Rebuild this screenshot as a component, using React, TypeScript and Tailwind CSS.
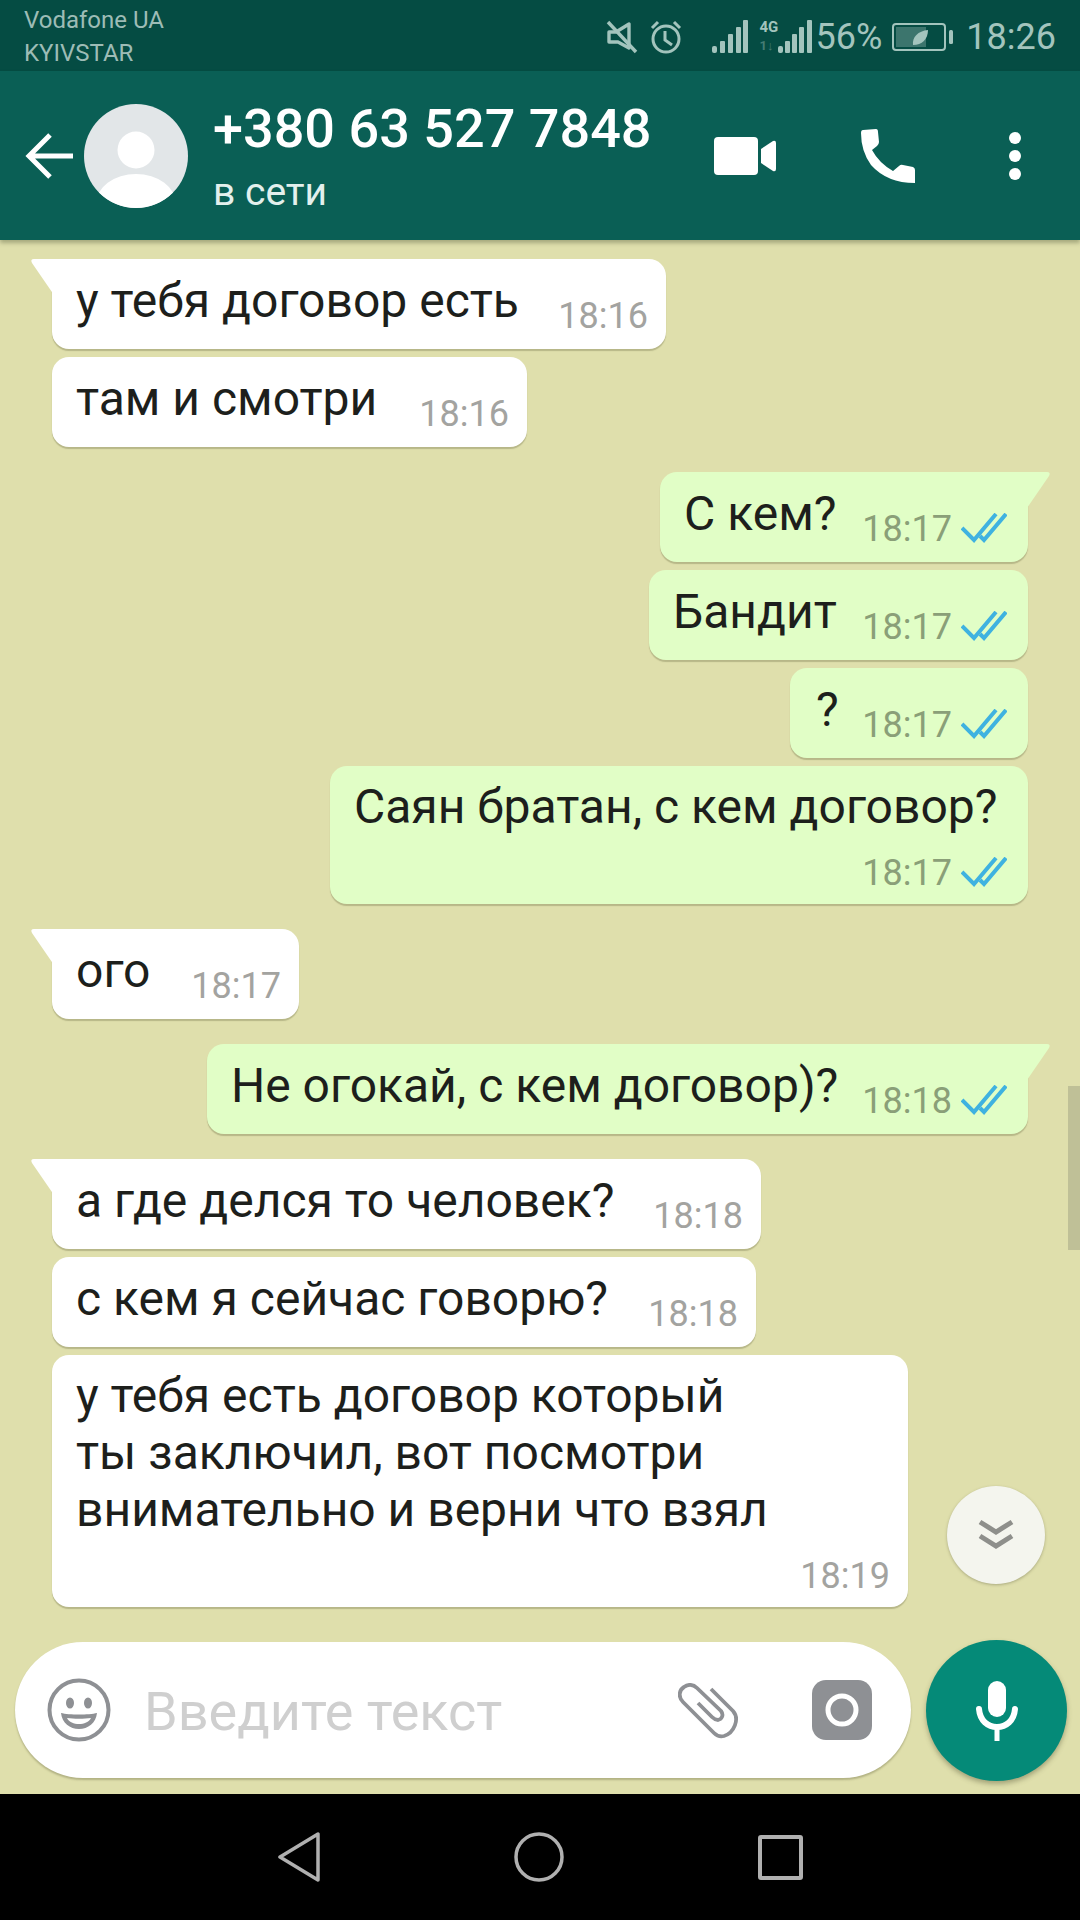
import React from 'react';

type Msg = { text: React.ReactNode; time: string; out?: boolean; tail?: boolean; block?: boolean; w: string; mt: string };

const MESSAGES: Msg[] = [
  { text: 'у тебя договор есть', time: '18:16', tail: true, w: 'w-[614px]', mt: 'mt-0' },
  { text: 'там и смотри', time: '18:16', w: 'w-[475px]', mt: 'mt-[8px]' },
  { text: 'С кем?', time: '18:17', out: true, tail: true, w: 'w-[368px]', mt: 'mt-[25px]' },
  { text: 'Бандит', time: '18:17', out: true, w: 'w-[379px]', mt: 'mt-[8px]' },
  { text: '?', time: '18:17', out: true, w: 'w-[238px]', mt: 'mt-[8px]' },
  { text: 'Саян братан, с кем договор?', time: '18:17', out: true, block: true, w: 'w-[698px]', mt: 'mt-[8px]' },
  { text: 'ого', time: '18:17', tail: true, w: 'w-[247px]', mt: 'mt-[25px]' },
  { text: 'Не огокай, с кем договор)?', time: '18:18', out: true, tail: true, w: 'w-[821px]', mt: 'mt-[25px]' },
  { text: 'а где делся то человек?', time: '18:18', tail: true, w: 'w-[709px]', mt: 'mt-[25px]' },
  { text: 'с кем я сейчас говорю?', time: '18:18', w: 'w-[704px]', mt: 'mt-[8px]' },
  {
    text: (
      <>
        у тебя есть договор который
        <br />
        ты заключил, вот посмотри
        <br />
        внимательно и верни что взял
      </>
    ),
    time: '18:19',
    block: true,
    w: 'w-[856px]',
    mt: 'mt-[8px]',
  },
];

const Ticks = () => (
  <svg width="46" height="30" viewBox="0 0 46 30" fill="none" stroke="#3fb2e0" strokeWidth="4" className="shrink-0 -mt-[2px]">
    <path d="M1 15 L13 27 L35 1" />
    <path d="M19 23 L23 27 L45 1" />
  </svg>
);

const Bubble = ({ m }: { m: Msg }) => {
  const timeColor = m.out ? 'text-[#8a9f78]' : 'text-[#a3a3a0]';
  return (
    <div
      className={`relative ${m.w} ${m.mt} ${m.out ? 'self-end bg-[#e1fec6]' : 'self-start bg-white'} rounded-[17px] shadow-[0_2px_1px_rgba(110,110,70,0.35)] ${m.tail ? (m.out ? 'rounded-tr-none' : 'rounded-tl-none') : ''}`}
    >
      {m.tail && (
        <svg
          width="24"
          height="36"
          viewBox="0 0 24 36"
          className={`absolute top-0 ${m.out ? 'right-[-23px]' : 'left-[-22px]'}`}
        >
          <path d={m.out ? 'M0 0 H20 Q24 0 22 4 L0 36 Z' : 'M24 0 H4 Q0 0 2 4 L24 36 Z'} fill={m.out ? '#e1fec6' : '#ffffff'} />
        </svg>
      )}
      {m.block ? (
        <div className="pl-[24px] pr-[25px] pt-[12px] pb-[13px]">
          <div className="text-[48px] leading-[57px] text-[#1d1f1c]">{m.text}</div>
          <div className={`flex justify-end items-center gap-[9px] h-[36px] mt-[20px] ${m.out ? '-mr-[4px]' : '-mr-[7px]'}`}>
            <span className={`text-[36px] ${timeColor}`}>{m.time}</span>
            {m.out && <Ticks />}
          </div>
        </div>
      ) : (
        <div className={`h-[90px] flex justify-between pl-[24px] ${m.out ? 'pr-[21px]' : 'pr-[18px]'}`}>
          <span className={`text-[48px] leading-[57px] pt-[13px] text-[#1d1f1c] ${m.text === '?' ? 'ml-[2px]' : ''}`}>{m.text}</span>
          <div className="flex items-center gap-[9px] h-[36px] mt-[39px]">
            <span className={`text-[36px] ${timeColor}`}>{m.time}</span>
            {m.out && <Ticks />}
          </div>
        </div>
      )}
    </div>
  );
};

const StatusIcons = () => (
  <div className="flex items-center text-[#a3c4bd] pt-[2px]">
    {/* muted speaker */}
    <svg width="32" height="34" viewBox="0 0 32 34" className="mr-[12px]">
      <path d="M23 4 V28 L12 22 H3 V12 H10 Z" fill="none" stroke="currentColor" strokeWidth="3.4" strokeLinejoin="round" />
      <path d="M2 2 L30 32" stroke="currentColor" strokeWidth="3.4" />
    </svg>
    {/* alarm */}
    <svg width="32" height="34" viewBox="0 0 32 34" fill="none" stroke="currentColor" strokeWidth="3" className="mr-[30px]">
      <circle cx="16" cy="19" r="13" />
      <path d="M15 11 V20 L22 25" />
      <path d="M2 8 L8 2 M30 8 L24 2" />
    </svg>
    {/* signal 1 */}
    <svg width="36" height="34" viewBox="0 0 36 34" fill="currentColor" className="mr-[12px]">
      <rect x="0" y="26" width="5" height="7" rx="2" />
      <rect x="8" y="21" width="5" height="12" rx="1" />
      <rect x="16" y="14" width="5" height="19" rx="1" />
      <rect x="24" y="7" width="5" height="26" rx="1" />
      <rect x="31" y="0" width="5" height="33" rx="1" />
    </svg>
    {/* 4G + signal 2 */}
    <div className="relative w-[16px] h-[34px] mr-[2px] font-['Liberation_Sans_Narrow','Roboto',sans-serif]">
      <span className="absolute left-0 top-[-2px] text-[15px] font-bold leading-[18px]">4G</span>
      <span className="absolute left-0 top-[18px] text-[13px] font-bold leading-[16px] opacity-40">1↓</span>
    </div>
    <svg width="34" height="34" viewBox="0 0 34 34" fill="currentColor" className="mr-[4px]">
      <rect x="0" y="26" width="5" height="7" rx="2" />
      <rect x="7" y="21" width="5" height="12" rx="1" />
      <rect x="14" y="14" width="5" height="19" rx="1" />
      <rect x="21" y="7" width="5" height="26" rx="1" />
      <rect x="29" y="0" width="5" height="33" rx="1" />
    </svg>
    <span className="text-[36px] leading-none mr-[10px]">56%</span>
    {/* battery */}
    <svg width="61" height="28" viewBox="0 0 61 28" className="mr-[13px]">
      <rect x="1" y="1" width="52" height="26" rx="3" fill="none" stroke="currentColor" strokeWidth="2" />
      <rect x="4" y="4" width="30" height="20" fill="currentColor" opacity="0.35" />
      <path d="M36 7 C26 8 20 14 21 22 C30 22 36 16 36 7 Z" fill="currentColor" />
      <rect x="57" y="7" width="4" height="14" rx="1.5" fill="currentColor" />
    </svg>
    <span className="text-[36px] leading-none">18:26</span>
  </div>
);

export default function App() {
  return (
    <div className="w-[1080px] h-[1920px] flex flex-col overflow-hidden font-['Roboto',sans-serif]">
      <div className="h-[71px] shrink-0 bg-[#054c43] flex justify-between pl-[24px] pr-[24px]">
        <div className="text-[24px] leading-[33px] text-[#9dbcb6] pt-[4px]">
          <div>Vodafone UA</div>
          <div>KYIVSTAR</div>
        </div>
        <StatusIcons />
      </div>

      <div className="relative z-10 h-[169px] shrink-0 bg-[#0a5f55] flex items-center shadow-[0_3px_4px_rgba(60,70,40,0.35)]">
        <svg width="48" height="46" viewBox="0 0 48 46" fill="none" stroke="#ffffff" strokeWidth="5" className="ml-[25px] shrink-0">
          <path d="M48 23 H4 M25 2 L4 23 L25 44" />
        </svg>
        <div className="w-[104px] h-[104px] rounded-full bg-[#e2e6e8] overflow-hidden ml-[11px] shrink-0">
          <svg viewBox="0 0 104 104" width="104" height="104" fill="#ffffff">
            <circle cx="52" cy="46" r="18.5" />
            <ellipse cx="52" cy="100" rx="40" ry="30" />
          </svg>
        </div>
        <div className="ml-[25px] w-[501px] shrink-0">
          <div className="text-[54px] leading-[62px] font-medium text-white whitespace-nowrap">+380 63 527 7848</div>
          <div className="text-[39px] leading-[42px] text-[#e3f0ed] mt-[11px]">в сети</div>
        </div>
        <svg width="62" height="38" viewBox="0 0 62 38" fill="#ffffff" className="shrink-0">
          <rect x="0" y="0" width="44" height="38" rx="4" />
          <path d="M47 12 L59 4 Q62 3 62 6 V32 Q62 35 59 34 L47 26 Z" />
        </svg>
        <svg width="54" height="54" viewBox="0 0 54 54" fill="#ffffff" className="ml-[85px] shrink-0">
          <path d="M2 1 L15 0 Q17 0 17 3 L18 13 Q18 15 16 17 L11 21 Q18 34 32 42 L38 37 Q40 35 42 36 L52 38 Q54 39 54 41 V54 Q26 54 10 36 Q0 22 0 4 Q0 1 2 1 Z" />
        </svg>
        <svg width="12" height="48" viewBox="0 0 12 48" fill="#ffffff" className="ml-[94px] shrink-0">
          <circle cx="6" cy="6" r="6" />
          <circle cx="6" cy="24" r="6" />
          <circle cx="6" cy="42" r="6" />
        </svg>
      </div>

      <div className="relative flex-1 bg-[#dfdfac] overflow-hidden">
        <div className="flex flex-col pt-[19px] pl-[52px] pr-[52px]">
          {MESSAGES.map((m, i) => (
            <Bubble key={i} m={m} />
          ))}
        </div>

        {/* scrollbar thumb */}
        <div className="absolute right-0 top-[846px] w-[12px] h-[164px] bg-[#bfc097]" />

        {/* scroll to bottom */}
        <div className="absolute left-[947px] top-[1246px] w-[98px] h-[98px] rounded-full bg-[#f4f5ee] shadow-[0_1px_3px_rgba(90,90,60,0.4)] flex items-center justify-center">
          <svg width="36" height="32" viewBox="0 0 36 32" fill="none" stroke="#8e8f8b" strokeWidth="5">
            <path d="M2 3 L18 13 L34 3" />
            <path d="M2 17 L18 27 L34 17" />
          </svg>
        </div>

        {/* composer */}
        <div className="absolute left-[15px] top-[1402px] w-[896px] h-[136px] rounded-[68px] bg-white shadow-[0_2px_2px_rgba(110,110,70,0.4)] flex items-center">
          <svg width="64" height="64" viewBox="0 0 64 64" className="ml-[32px] shrink-0">
            <circle cx="32" cy="32" r="29.5" fill="none" stroke="#8e9094" strokeWidth="4" />
            <ellipse cx="23" cy="25" rx="4" ry="5.5" fill="#8e9094" />
            <ellipse cx="41" cy="25" rx="4" ry="5.5" fill="#8e9094" />
            <path d="M14 35 C22 37 42 37 50 35 C49 45 41 51 32 51 C23 51 15 45 14 35 Z" fill="#8e9094" />
            <path d="M20 40 C27 41 37 41 44 40 C42 44 37 46 32 46 C27 46 22 44 20 40 Z" fill="#ffffff" />
          </svg>
          <span className="ml-[33px] mt-[4px] text-[54px] text-[#cfcfcf] leading-none">Введите текст</span>
          <svg width="62" height="56" viewBox="0 0 62 56" fill="none" stroke="#8e9094" strokeWidth="3.8" className="absolute left-[663px] top-[41px]">
            <path d="M33 6 L55 28 C62 36 56 50 46 53 C42 54 39 53 36 50 L5 19 C0 14 1 7 6 4 C10 1 15 1 19 5 L43 28 C46 32 44 36 40 37 C38 37 36 36 34 34 L20 20" />
          </svg>
          <svg width="60" height="60" viewBox="0 0 60 60" className="absolute left-[797px] top-[38px]">
            <rect width="60" height="60" rx="14" fill="#8e9094" />
            <circle cx="30" cy="30" r="14" fill="none" stroke="#ffffff" strokeWidth="5" />
          </svg>
        </div>

        {/* mic */}
        <div className="absolute left-[926px] top-[1400px] w-[141px] h-[141px] rounded-full bg-[#058a78] shadow-[0_3px_5px_rgba(90,90,60,0.45)] flex items-center justify-center">
          <svg width="44" height="60" viewBox="0 0 44 60" className="mt-[1px]">
            <rect x="13" y="0" width="18" height="36" rx="9" fill="#ffffff" />
            <path d="M4 28 C5 40 13 46 22 46 C31 46 39 40 40 28" fill="none" stroke="#ffffff" strokeWidth="6" strokeLinecap="round" />
            <rect x="19.5" y="46" width="5" height="14" fill="#ffffff" />
          </svg>
        </div>
      </div>

      <div className="h-[126px] shrink-0 bg-black flex items-center justify-center gap-[194px]">
        <svg width="42" height="50" viewBox="0 0 42 50" fill="none" stroke="#b0b0b0" strokeWidth="3.5" strokeLinejoin="round">
          <path d="M40 2 V48 L2 25 Z" />
        </svg>
        <svg width="50" height="50" viewBox="0 0 50 50" fill="none" stroke="#b0b0b0" strokeWidth="3.5">
          <circle cx="25" cy="25" r="23" />
        </svg>
        <svg width="45" height="45" viewBox="0 0 45 45" fill="none" stroke="#b0b0b0" strokeWidth="4">
          <rect x="2" y="2" width="41" height="41" rx="1" />
        </svg>
      </div>
    </div>
  );
}
